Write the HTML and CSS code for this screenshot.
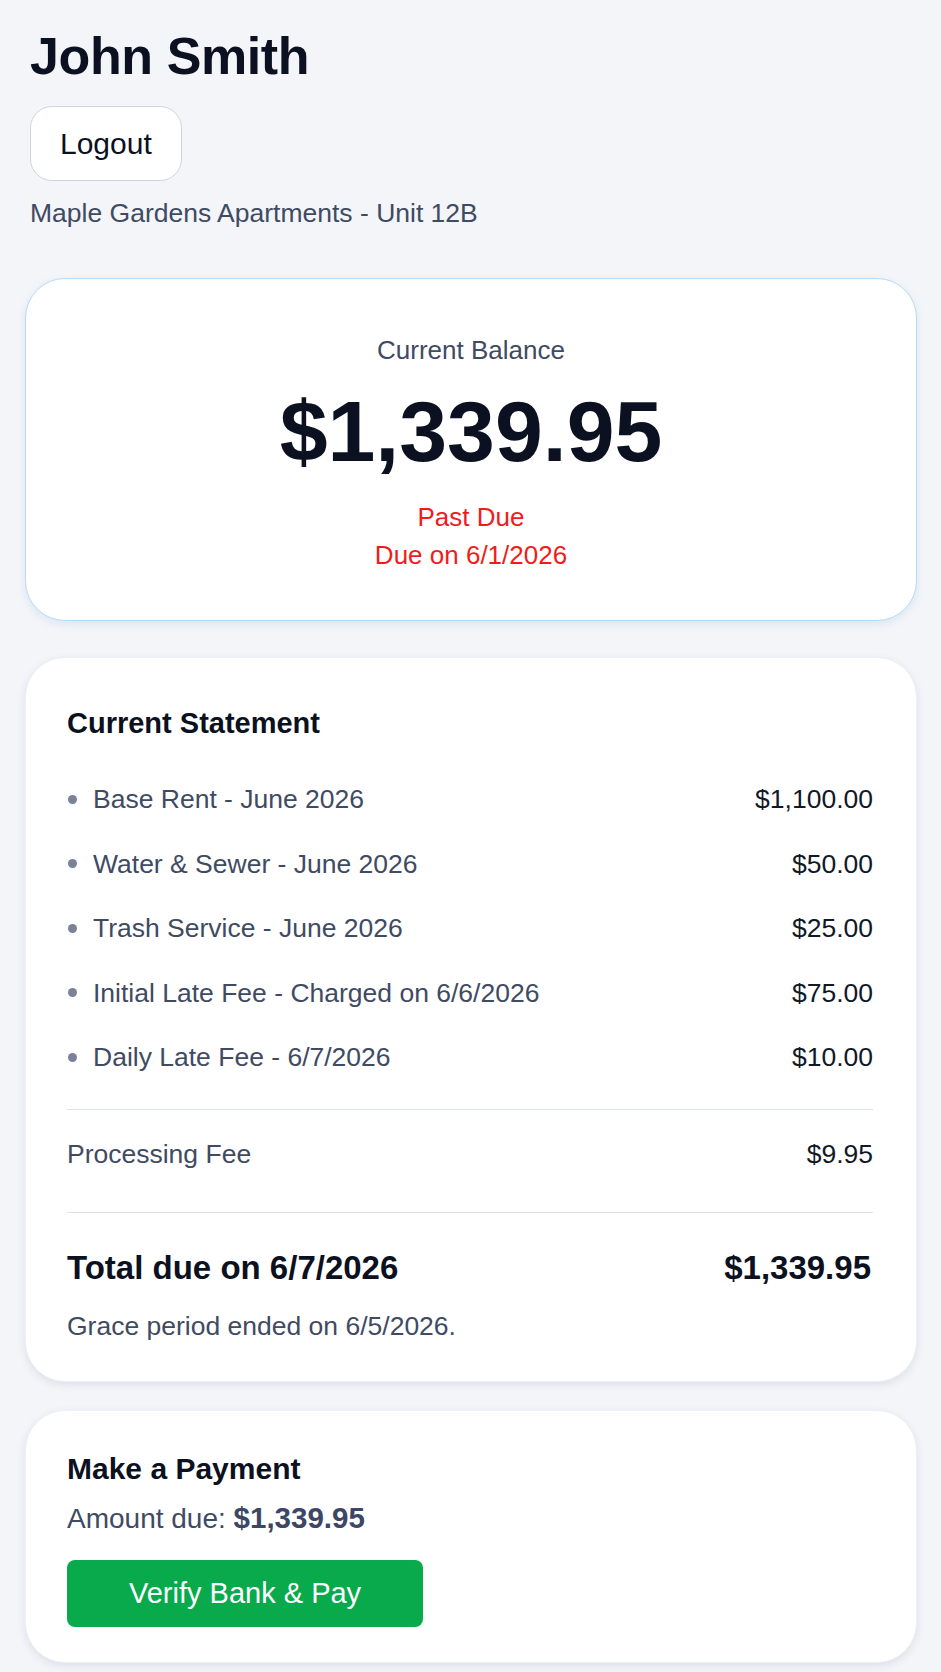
FILE: index.html
```html
<!DOCTYPE html>
<html lang="en">
<head>
<meta charset="utf-8">
<title>Tenant Portal</title>
<link rel="stylesheet" href="styles.css">
</head>
<body>
<main class="page">
  <header class="header">
    <h1 class="name">John Smith</h1>
    <button class="logout" type="button">Logout</button>
    <p class="unit">Maple Gardens Apartments - Unit 12B</p>
  </header>

  <section class="card balance">
    <div class="balance-label">Current Balance</div>
    <div class="balance-amount">$1,339.95</div>
    <div class="balance-status">Past Due</div>
    <div class="balance-due">Due on 6/1/2026</div>
  </section>

  <section class="card statement">
    <h2 class="card-title">Current Statement</h2>
    <ul class="items">
      <li class="item"><span class="item-label"><span class="dot"></span>Base Rent - June 2026</span><span class="item-amount">$1,100.00</span></li>
      <li class="item"><span class="item-label"><span class="dot"></span>Water &amp; Sewer - June 2026</span><span class="item-amount">$50.00</span></li>
      <li class="item"><span class="item-label"><span class="dot"></span>Trash Service - June 2026</span><span class="item-amount">$25.00</span></li>
      <li class="item"><span class="item-label"><span class="dot"></span>Initial Late Fee - Charged on 6/6/2026</span><span class="item-amount">$75.00</span></li>
      <li class="item"><span class="item-label"><span class="dot"></span>Daily Late Fee - 6/7/2026</span><span class="item-amount">$10.00</span></li>
    </ul>
    <div class="fee-row">
      <span class="fee-label">Processing Fee</span>
      <span class="item-amount">$9.95</span>
    </div>
    <div class="total-row">
      <span>Total due on 6/7/2026</span>
      <span>$1,339.95</span>
    </div>
    <p class="grace">Grace period ended on 6/5/2026.</p>
  </section>

  <section class="card payment">
    <h2 class="card-title pay-title">Make a Payment</h2>
    <p class="amount-due">Amount due: <strong>$1,339.95</strong></p>
    <button class="pay" type="button">Verify Bank &amp; Pay</button>
  </section>
</main>
</body>
</html>
```

FILE: styles.css
```css
* { box-sizing: border-box; }

html, body {
  margin: 0;
  padding: 0;
  background: #f3f5f9;
}

body {
  font-family: "Liberation Sans", Arial, Helvetica, sans-serif;
  color: #0f172a;
}

.page {
  padding: 26px 24px 10px 25px;
  display: flex;
  flex-direction: column;
}

.header {
  padding-left: 5px;
  display: flex;
  flex-direction: column;
  align-items: flex-start;
}

.name {
  margin: 0;
  font-size: 52px;
  line-height: 60px;
  font-weight: 700;
  letter-spacing: -0.4px;
  color: #0b1120;
}

.logout {
  margin-top: 20px;
  height: 75px;
  padding: 0 29px;
  font-family: inherit;
  font-size: 30px;
  color: #0b1120;
  background: #ffffff;
  border: 1px solid #cfd5e0;
  border-radius: 22px;
}

.unit {
  margin: 14px 0 0;
  font-size: 26.5px;
  line-height: 36px;
  color: #3f4a63;
}

.card {
  background: #ffffff;
  border-radius: 40px;
}

.balance {
  margin-top: 47px;
  border: 1.5px solid #b5dcf6;
  box-shadow: 0 3px 8px rgba(120, 160, 200, 0.18);
  padding: 53px 20px 46px;
  display: flex;
  flex-direction: column;
  align-items: center;
  text-align: center;
}

.balance-label {
  font-size: 26px;
  line-height: 36px;
  color: #3f4a63;
}

.balance-amount {
  margin-top: 16px;
  font-size: 86px;
  line-height: 94px;
  font-weight: 700;
  letter-spacing: 0;
  color: #0b1120;
}

.balance-status {
  margin-top: 20px;
  font-size: 26px;
  line-height: 38px;
  color: #f01c1c;
}

.balance-due {
  font-size: 26px;
  line-height: 38px;
  color: #f01c1c;
}

.statement {
  margin-top: 36px;
  border: 1px solid #eceff4;
  box-shadow: 0 3px 8px rgba(30, 45, 80, 0.10);
  padding: 47px 43px 36px 41px;
}

.card-title {
  margin: 0;
  font-size: 29px;
  line-height: 36px;
  font-weight: 700;
  color: #0b1120;
}

.items {
  list-style: none;
  margin: 26px 0 0;
  padding: 0;
}

.item {
  display: flex;
  justify-content: space-between;
  align-items: center;
  padding: 14px 0;
  font-size: 26.5px;
  line-height: 36.5px;
}

.item-label {
  display: flex;
  align-items: center;
  color: #3f4a63;
}

.dot {
  width: 9px;
  height: 9px;
  border-radius: 50%;
  background: #7a8199;
  margin: 0 16px 0 1px;
  flex: none;
}

.item-amount {
  color: #111827;
  font-size: 26.5px;
}

.fee-row {
  margin-top: 19px;
  border-top: 1.5px solid #dde1e8;
  padding: 26px 0 40px;
  display: flex;
  justify-content: space-between;
  font-size: 26.5px;
  line-height: 36.5px;
}

.fee-label {
  color: #3f4a63;
}

.total-row {
  border-top: 1.5px solid #dde1e8;
  padding: 34px 2px 0 0;
  display: flex;
  justify-content: space-between;
  font-size: 33px;
  line-height: 42px;
  font-weight: 700;
  color: #0b1120;
}

.grace {
  margin: 19px 0 0;
  font-size: 26.5px;
  line-height: 36.5px;
  color: #3f4a63;
}

.payment {
  margin-top: 28px;
  border: 1px solid #eceff4;
  box-shadow: 0 3px 8px rgba(30, 45, 80, 0.10);
  padding: 40px 43px 35px 41px;
  display: flex;
  flex-direction: column;
  align-items: flex-start;
}

.pay-title {
  font-size: 30px;
}

.amount-due {
  margin: 13px 0 0;
  font-size: 28px;
  line-height: 36.5px;
  color: #3f4a63;
}

.amount-due strong {
  font-size: 29.5px;
  color: #3b4765;
}

.pay {
  margin-top: 23px;
  height: 67px;
  padding: 0 62px;
  font-family: inherit;
  font-size: 29px;
  color: #ffffff;
  background: #08aa4c;
  border: none;
  border-radius: 8px;
}
```
